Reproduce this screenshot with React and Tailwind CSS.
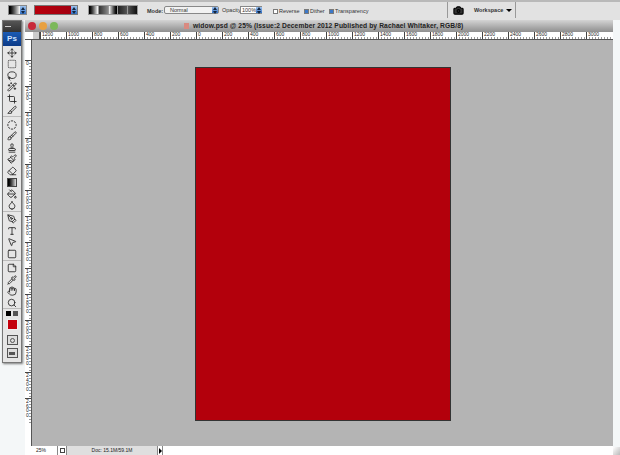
// Photoshop CS3 window: options bar, floating toolbox, document window with rulers.
import {
  Brush, Camera, CircleDashed, Crop, Droplet, Eraser, Hand, Lasso, Move, PaintBucket,
  Paintbrush, PenTool, Pipette, Search, Slice, Square, SquareDashed, Stamp, StickyNote,
  Type, Wand2, MousePointer2,
} from 'lucide-react';

const RULER = ['1200', '1000', '800', '600', '400', '200', '0', '200', '400', '600', '800', '1000', '1200', '1400', '1600', '1800', '2000', '2200', '2400', '2600', '2800', '3000'];
const VRULER = ['0', '200', '400', '600', '800', '1000', '1200', '1400', '1600', '1800', '2000', '2200', '2400', '2600'];

const TOOL_GROUPS = [
  [Move, SquareDashed, Lasso, Wand2, Crop, Slice],
  [CircleDashed, Brush, Stamp, Paintbrush, Eraser, 'gradient', PaintBucket, Droplet],
  [PenTool, Type, MousePointer2, Square],
  [StickyNote, Pipette, Hand, Search],
];

function Arrows({ className = 'w-[6px]' }) {
  return (
    <span className={`${className} h-full shrink-0 bg-gradient-to-b from-[#9fc4f0] to-[#2f6fc4] flex flex-col items-center justify-center gap-px`}>
      <span className="w-0 h-0 border-x-2 border-x-transparent border-b-[3px] border-b-[#10243f]" />
      <span className="w-0 h-0 border-x-2 border-x-transparent border-t-[3px] border-t-[#10243f]" />
    </span>
  );
}

function Check({ on, label }) {
  return (
    <span className="flex items-center gap-px">
      <span className={`w-[5px] h-[5px] shrink-0 border border-[#7a7a7a] ${on ? 'bg-[#3c78c8]' : 'bg-white'}`} />
      <span>{label}</span>
    </span>
  );
}

function OptionsBar() {
  return (
    <div className="h-[20px] shrink-0 bg-[#e2e2e2] border-t-2 border-[#b9b9b9] flex items-start text-[5.5px] text-[#333] pt-[3px] pl-[8px]">
      <div className="w-[19px] h-[10px] flex border border-[#888]">
        <span className="flex-1 bg-gradient-to-r from-black to-white" />
        <Arrows />
      </div>
      <div className="w-[44px] h-[10px] ml-[7px] flex border border-[#777]">
        <span className="flex-1 bg-gradient-to-r from-[#b8000c] to-[#a30010]" />
        <Arrows />
      </div>
      <div className="w-[50px] h-[10px] ml-[10px] flex gap-px bg-[#999] p-px">
        {['from-black to-white', 'from-[#333] to-[#888]', 'from-white to-black', 'from-[#222] to-[#555]', 'from-[#555] to-[#111]'].map((g) => (
          <span key={g} className={`flex-1 bg-gradient-to-r ${g}`} />
        ))}
      </div>
      <span className="ml-[9px] mt-[2px] w-[14px] font-bold">Mode:</span>
      <div className="w-[55px] h-[8px] ml-[3px] mt-px flex items-center border border-[#888] bg-[#f2f2f2] rounded-[2px] pl-[5px]">
        <span className="flex-1">Normal</span>
        <Arrows />
      </div>
      <span className="ml-[3px] mt-px w-[17px] whitespace-nowrap">Opacity:</span>
      <div className="w-[22px] h-[8px] ml-px mt-px flex items-center border border-[#888] bg-white pl-px">
        <span className="flex-1">100%</span>
        <Arrows />
      </div>
      <div className="ml-[11px] mt-[2px] flex gap-[7px]">
        <span className="w-[24px]"><Check label="Reverse" /></span>
        <span className="w-[18px]"><Check on label="Dither" /></span>
        <span><Check on label="Transparency" /></span>
      </div>
      <div className="ml-auto h-[16px] w-[173px] -mt-[3px] flex items-center shrink-0">
        <span className="w-px h-full bg-[#999]" />
        <Camera size={11} strokeWidth={2.5} className="ml-[5px] text-black fill-[#333]" />
        <span className="ml-[10px] font-bold">Workspace</span>
        <span className="ml-[3px] w-0 h-0 border-x-[3px] border-x-transparent border-t-[3px] border-t-black" />
        <span className="ml-[3px] w-px h-full bg-[#999]" />
      </div>
    </div>
  );
}

function Tool({ Icon }) {
  return (
    <div className="h-[11.5px] flex items-center justify-center">
      {Icon === 'gradient' ? (
        <span className="w-[10px] h-[9px] bg-gradient-to-r from-black to-[#ddd] border border-[#444]" />
      ) : (
        <Icon size={10} strokeWidth={2} className="text-[#222]" />
      )}
    </div>
  );
}

function Toolbox() {
  return (
    <div className="w-[20px] h-[343px] ml-[2px] bg-[#e6e6e6] border border-[#777] flex flex-col shadow-[1px_1px_2px_rgba(0,0,0,0.5)]">
      <div className="h-[11px] shrink-0 bg-gradient-to-b from-[#555] to-[#333] flex items-center pl-[2px]">
        <span className="w-[6px] h-px bg-[#ccc]" />
      </div>
      <div className="h-[14px] shrink-0 bg-gradient-to-b from-[#1c5cb4] to-[#0b3a88] flex items-center justify-center text-[8px] font-bold text-[#cfe3ff]">Ps</div>
      <div className="mt-[1px] flex flex-col gap-[1.8px]">
        {TOOL_GROUPS.map((group, i) => (
          <div key={i} className="border-b border-[#bbb]">
            {group.map((Icon, j) => <Tool key={j} Icon={Icon} />)}
          </div>
        ))}
      </div>
      <div className="h-[9px] shrink-0 flex items-center justify-between px-[3px]">
        <span className="w-[5px] h-[5px] bg-black" />
        <span className="w-[5px] h-[5px] bg-[#555]" />
      </div>
      <div className="flex justify-center mt-[1px]">
        <span className="w-[11px] h-[11px] bg-[#c4000c] border border-[#eee]" />
      </div>
      <div className="mt-[5px] flex flex-col items-center gap-[3px]">
        <span className="w-[11px] h-[10px] border border-[#555] bg-[#ddd] flex items-center justify-center">
          <span className="w-[5px] h-[5px] rounded-full border border-[#555]" />
        </span>
        <span className="w-[11px] h-[10px] border border-[#555] bg-[#ddd] flex items-center justify-center">
          <span className="w-[6px] h-[3px] bg-[#555]" />
        </span>
      </div>
    </div>
  );
}

function HRuler() {
  return (
    <div className="h-[8px] shrink-0 bg-white border-b border-[#555] flex text-[5px] leading-[5px] text-[#222] pl-[8px] overflow-hidden">
      <span className="w-[7px] shrink-0 bg-[#ccc] border-r border-[#555]" />
      {RULER.map((label, i) => (
        <span key={i} className="w-[26px] shrink-0 h-full border-l border-[#444] pl-px bg-[repeating-linear-gradient(90deg,transparent_0,transparent_2px,#999_2px,#999_3px)] bg-[length:100%_2px] bg-bottom bg-no-repeat">
          {label}
        </span>
      ))}
    </div>
  );
}

function VRuler() {
  return (
    <div className="w-[7px] shrink-0 bg-white border-r border-[#555] flex flex-col text-[5px] leading-[4.6px] text-[#222] pt-[20px]">
      {VRULER.map((label, i) => (
        <span key={i} className="h-[26px] shrink-0 border-t border-[#444] flex flex-col pl-px bg-[repeating-linear-gradient(180deg,transparent_0,transparent_2px,#999_2px,#999_3px)] bg-[length:2px_100%] bg-right bg-no-repeat">
          {label.split('').map((d, j) => <span key={j}>{d}</span>)}
        </span>
      ))}
    </div>
  );
}

function DocWindow() {
  return (
    <div className="flex-1 min-w-0 flex flex-col">
      <div className="h-[12px] shrink-0 bg-gradient-to-b from-[#d4d4d4] to-[#8f8f8f] flex items-center pl-[3px]">
        <span className="w-[8px] h-[8px] rounded-full bg-[#c8283a]" />
        <span className="w-[8px] h-[8px] rounded-full bg-[#e8a040] ml-[3px]" />
        <span className="w-[8px] h-[8px] rounded-full bg-[#7cb85a] ml-[3px]" />
        <span className="w-[5px] h-[6px] bg-[#d98a80] ml-[126px]" />
        <span className="ml-[4px] text-[6.7px] font-bold tracking-[0.1px] text-[#222] whitespace-nowrap">widow.psd @ 25% (Issue:2 December 2012 Published by Rachael Whitaker, RGB/8)</span>
      </div>
      <HRuler />
      <div className="flex-1 min-h-0 flex">
        <VRuler />
        <div className="flex-1 bg-[#b4b4b4] pl-[163px] pt-[27px]">
          <div className="w-[256px] h-[354px] bg-[#b3000c] border border-[#333]" />
        </div>
      </div>
      <div className="h-[9px] shrink-0 bg-white flex items-center text-[5px] text-[#222]">
        <span className="w-[32px] pl-[11px] h-full flex items-center">25%</span>
        <span className="w-[10px] h-full border-x border-[#888] flex items-center justify-center">
          <span className="w-[5px] h-[5px] border border-[#444]" />
        </span>
        <span className="w-[90px] h-full flex items-center justify-center bg-[#dfdfdf]">Doc: 15.1M/59.1M</span>
        <span className="w-[6px] h-full border-x border-[#888] flex items-center justify-center">
          <span className="w-0 h-0 border-y-[3px] border-y-transparent border-l-[3px] border-l-black" />
        </span>
      </div>
    </div>
  );
}

export default function App() {
  return (
    <div className="w-[620px] h-[455px] overflow-hidden bg-[#f4f7f8] flex flex-col font-['Liberation_Sans',sans-serif]">
      <OptionsBar />
      <div className="flex-1 min-h-0 flex">
        <div className="w-[25px] shrink-0">
          <Toolbox />
        </div>
        <DocWindow />
        <div className="w-[7px] shrink-0 flex items-end">
          <span className="w-[7px] h-[8px] bg-gradient-to-br from-white to-[#bbb]" />
        </div>
      </div>
    </div>
  );
}
